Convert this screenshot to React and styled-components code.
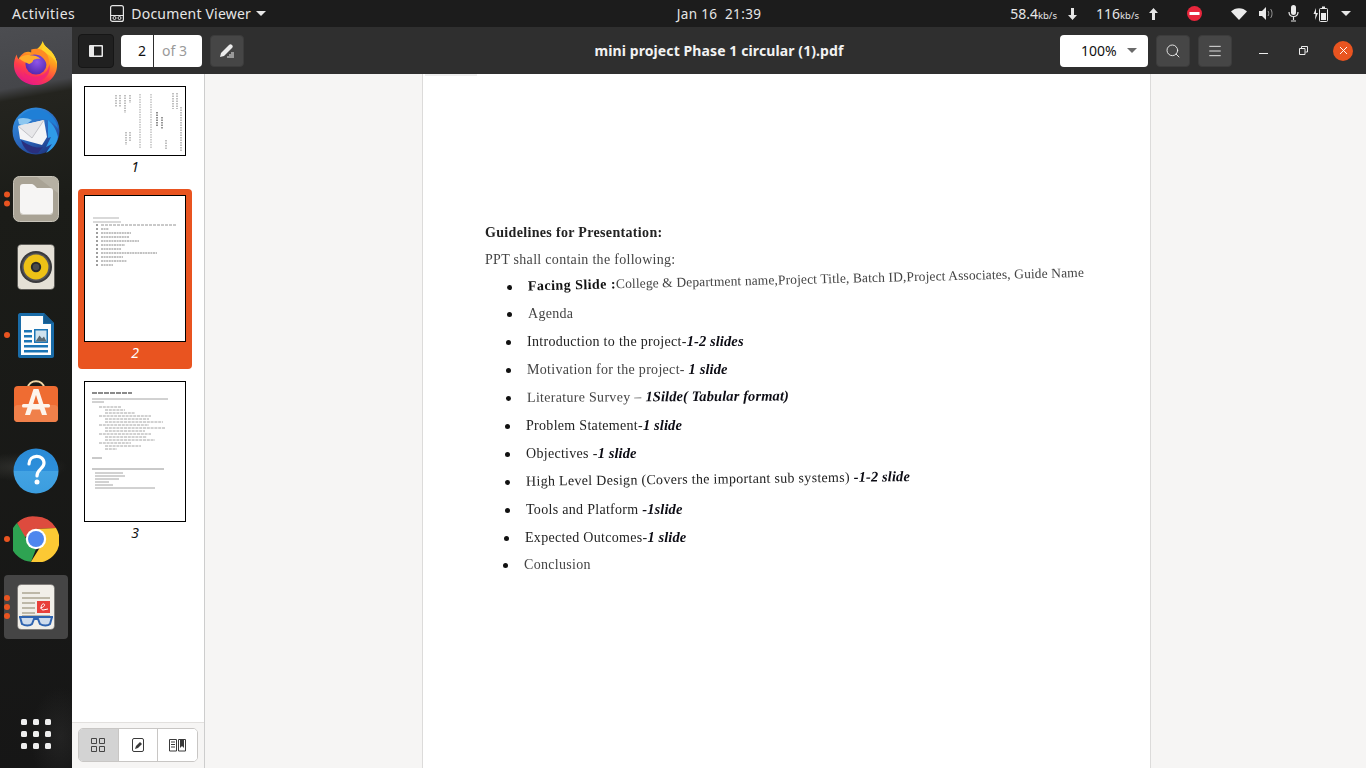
import React from "react";
import styled, { createGlobalStyle } from "styled-components";
import { Search, Menu, X } from "lucide-react";

const GlobalStyle = createGlobalStyle`
  html, body {
    margin: 0;
    padding: 0;
    height: 100%;
    overflow: hidden;
    background: #f6f5f4;
    font-family: "Noto Sans", "Open Sans", sans-serif;
  }
  * { box-sizing: border-box; }
`;

const Screen = styled.div`
  width: 1366px;
  height: 768px;
  display: flex;
  flex-direction: column;
  overflow: hidden;
`;

/* gnome top bar */
const TopBar = styled.div`
  height: 27px;
  flex: none;
  background: #1c1c1c;
  color: #e6e6e6;
  font-size: 14px;
  display: grid;
  grid-template-columns: 1fr auto 1fr;
  align-items: center;
`;

const TopLeft = styled.div`
  display: flex;
  align-items: center;
  padding-left: 12px;
`;

const Activities = styled.span`
  letter-spacing: 0.5px;
`;

const AppMenu = styled.div`
  display: flex;
  align-items: center;
  gap: 7px;
  margin-left: 35px;
  letter-spacing: 0.2px;
`;

const Caret = styled.span`
  width: 0;
  height: 0;
  border-left: ${(p) => p.$size || 5}px solid transparent;
  border-right: ${(p) => p.$size || 5}px solid transparent;
  border-top: ${(p) => p.$size || 5}px solid ${(p) => p.$color || "#e6e6e6"};
  margin-left: ${(p) => p.$gap || 0}px;
`;

const Clock = styled.div`
  font-size: 13.5px;
  letter-spacing: 0.35px;
  white-space: pre;
  margin-left: 72px;
`;

const TopRight = styled.div`
  display: flex;
  align-items: center;
  justify-content: flex-end;
  padding-right: 15px;
`;

const Speed = styled.span`
  font-size: 14px;
  margin-left: ${(p) => p.$gap}px;
  small {
    font-size: 9.5px;
  }
`;

const TrayIcon = styled.svg`
  display: block;
  flex: none;
  margin-left: ${(p) => p.$gap}px;
`;

const Body = styled.div`
  flex: 1;
  display: flex;
  min-height: 0;
`;

/* ubuntu dock */
const Dock = styled.div`
  width: 72px;
  flex: none;
  position: relative;
  display: flex;
  flex-direction: column;
  align-items: center;
  padding-top: 2px;
  background:
    radial-gradient(ellipse 50px 14px at 18px 440px, rgba(120, 120, 115, 0.22), transparent),
    radial-gradient(ellipse 30px 50px at 60px 710px, rgba(90, 90, 90, 0.18), transparent),
    linear-gradient(170deg, #4c4d51 0, #45464a 62px, #24241f 74px, #1b1c18 180px, #161616 100%);
`;

const DockSlot = styled.div`
  width: 64px;
  height: 68px;
  flex: none;
  position: relative;
  display: flex;
  align-items: center;
  justify-content: center;
  border-radius: 4px;
  ${(p) => p.$active && "height: 64px; margin-top: 2px; margin-bottom: 2px; background: #454545;"}
`;

const RunDots = styled.div`
  position: absolute;
  left: 0;
  top: 50%;
  transform: translateY(-50%);
  display: flex;
  flex-direction: column;
  gap: 3px;
  span {
    width: 6px;
    height: 6px;
    border-radius: 50%;
    background: #e95420;
  }
`;

const AppsGrid = styled.div`
  margin-top: auto;
  margin-bottom: 19px;
  display: grid;
  grid-template-columns: repeat(3, 6px);
  gap: 6px;
  span {
    width: 6px;
    height: 6px;
    border-radius: 1.5px;
    background: #eeeeee;
  }
`;

const Window = styled.div`
  flex: 1;
  display: flex;
  flex-direction: column;
  min-width: 0;
`;

const HeaderBar = styled.div`
  height: 47px;
  flex: none;
  background: #2f2f2f;
  display: flex;
  align-items: center;
  padding-left: 6px;
  position: relative;
`;

const HeadButton = styled.div`
  width: 34px;
  height: 32px;
  flex: none;
  border-radius: 4px;
  display: flex;
  align-items: center;
  justify-content: center;
  background: ${(p) => (p.$pressed ? "#202020" : "#464646")};
  border: 1px solid ${(p) => (p.$pressed ? "#161616" : "#3c3c3c")};
  margin-left: ${(p) => p.$gap || 0}px;
  ${(p) => p.$pressed && "width: 36px; height: 34px;"}
`;

const PageBox = styled.div`
  width: 81px;
  height: 32px;
  margin-left: 7px;
  flex: none;
  display: flex;
  background: #fff;
  border-radius: 4px;
  font-size: 14px;
  align-items: stretch;
`;

const PageNum = styled.div`
  width: 33px;
  padding-right: 7px;
  border-right: 1px solid #2d2d2d;
  display: flex;
  align-items: center;
  justify-content: flex-end;
  color: #111;
`;

const PageOf = styled.div`
  flex: 1;
  display: flex;
  align-items: center;
  padding-left: 8px;
  color: #9a9a9a;
`;

const Title = styled.div`
  position: absolute;
  left: 0;
  right: 0;
  top: 0;
  bottom: 1px;
  display: flex;
  align-items: center;
  justify-content: center;
  color: #f2f2f2;
  font-size: 14px;
  font-weight: 700;
  letter-spacing: 0.1px;
  pointer-events: none;
`;

const HeadEnd = styled.div`
  margin-left: auto;
  display: flex;
  align-items: center;
  padding-right: 13px;
`;

const ZoomBox = styled.div`
  width: 88px;
  height: 32px;
  background: #fff;
  border-radius: 4px;
  display: flex;
  align-items: center;
  padding-left: 21px;
  color: #111;
  font-size: 14px;
  gap: 10px;
`;

const WinCtl = styled.div`
  width: 20px;
  height: 20px;
  flex: none;
  display: flex;
  align-items: center;
  justify-content: center;
  margin-left: ${(p) => p.$gap}px;
  border-radius: 50%;
  ${(p) => p.$close && "background: #e95420;"}
`;

const Main = styled.div`
  flex: 1;
  display: flex;
  min-height: 0;
`;

const Sidebar = styled.div`
  width: 133px;
  flex: none;
  background: #fff;
  border-right: 1px solid #cdcdcd;
  display: flex;
  flex-direction: column;
`;

const ThumbList = styled.div`
  flex: 1;
  display: flex;
  flex-direction: column;
  align-items: flex-start;
  padding: 6px 0 0 6px;
`;

const ThumbItem = styled.div`
  width: 114px;
  padding: 6px 6px 0;
  margin-top: ${(p) => p.$top || 0}px;
  border-radius: 4px;
  height: ${(p) => p.$h}px;
  background: ${(p) => (p.$selected ? "#e95420" : "transparent")};
  color: ${(p) => (p.$selected ? "#fff" : "#111")};
`;

const ThumbPage = styled.svg`
  display: block;
  width: 102px;
  height: ${(p) => p.$h}px;
  background: #fff;
  border: 1px solid #000;
`;

const ThumbInk = styled.g`
  filter: blur(0.45px);
`;

const ThumbNo = styled.div`
  font-size: 14px;
  font-style: italic;
  text-align: center;
  line-height: 22px;
`;

const SideFoot = styled.div`
  height: 46px;
  flex: none;
  background: #f6f5f4;
  border-top: 1px solid #e2e0de;
  padding: 5px 6px;
`;

const ModeGroup = styled.div`
  width: 120px;
  height: 34px;
  display: flex;
  border: 1px solid #c8c6c4;
  border-radius: 5px;
  overflow: hidden;
  background: #fff;
`;

const ModeBtn = styled.div`
  flex: 1;
  display: flex;
  align-items: center;
  justify-content: center;
  background: ${(p) => (p.$on ? "#d3d3d3" : "#fff")};
  & + & {
    border-left: 1px solid #c8c6c4;
  }
`;

const Viewport = styled.div`
  flex: 1;
  min-width: 0;
  background: #f6f5f4;
  padding-left: 217px;
`;

const Sheet = styled.div`
  width: 729px;
  height: 100%;
  background: #fff;
  border-left: 1px solid #dcdbda;
  border-right: 1px solid #dcdbda;
  position: relative;
  padding-top: 145px;
`;

const Scan = styled.div`
  font-family: "Liberation Serif", "Times New Roman", serif;
  color: #1a1a1a;
  filter: blur(0.35px);
  font-size: 14px;
`;

const ScanTop = styled.div`
  position: absolute;
  left: 2px;
  top: 0;
  width: 52px;
  height: 2px;
  background: #efefef;
`;

const Heading = styled.div`
  margin-left: 62px;
  height: 27px;
  line-height: 27px;
  font-weight: 700;
  font-size: 14px;
  letter-spacing: 0.33px;
  color: #222;
`;

const Lead = styled.div`
  margin-left: 62px;
  height: 27px;
  line-height: 27px;
  font-size: 14px;
  letter-spacing: 0.3px;
  color: #444;
`;

const Points = styled.ul`
  margin: 0;
  padding: 0;
  list-style: none;
`;

const Point = styled.li`
  height: ${(p) => p.$h || 28}px;
  line-height: ${(p) => p.$h || 28}px;
  margin-left: ${(p) => p.$x}px;
  white-space: pre;
  font-size: 14px;
  letter-spacing: 0.3px;
  transform: rotate(${(p) => p.$tilt || 0}deg);
  transform-origin: left center;
  color: ${(p) => p.$ink || "#222"};
  &::before {
    content: "";
    display: inline-block;
    vertical-align: middle;
    width: 5px;
    height: 5px;
    border-radius: 50%;
    background: #111;
    margin-right: 16px;
  }
`;

const Dur = styled.b`
  font-style: italic;
  font-size: 14.5px;
  letter-spacing: 0.1px;
  color: #0c0c14;
`;

const Strong = styled.b`
  color: #111;
  letter-spacing: 0.45px;
`;

const Small = styled.span`
  font-size: 13.5px;
  letter-spacing: 0.12px;
  color: #444;
`;

/* dock icons */
const Firefox = () => (
  <svg width="46" height="46" viewBox="0 0 48 48">
    <defs>
      <linearGradient id="ffBody" x1="0.75" y1="0.05" x2="0.3" y2="1">
        <stop offset="0" stopColor="#ffe226" />
        <stop offset="0.35" stopColor="#ff9a1e" />
        <stop offset="0.68" stopColor="#ff3d4a" />
        <stop offset="1" stopColor="#e3148f" />
      </linearGradient>
      <radialGradient id="ffCore" cx="0.55" cy="0.4" r="0.7">
        <stop offset="0" stopColor="#8f55e8" />
        <stop offset="1" stopColor="#4a22a8" />
      </radialGradient>
    </defs>
    <path d="M31 1c1 5 5 7 9 11 4 5 6 10 6 14 0 12-10 21-22 21S1 38 1 26c0-4 1-8 3-11 0 2 1 4 2 5 1-3 3-5 6-7 3-1 5-1 7 0 4-2 10-5 12-12z" fill="url(#ffBody)" />
    <path d="M31 1c1 5 5 7 9 11 4 5 6 10 6 14-2-6-5-8-11-12 -2-1-4-2-6-2 2-3 3-7 2-11z" fill="#ffd32a" />
    <circle cx="24" cy="25" r="11" fill="url(#ffCore)" />
    <path d="M6 19c4-3 8-4 12-3 4 0 8 1 11 4-3-1-6 0-8 1 0 2-2 3-4 4-2-1-6-2-11-6z" fill="#ffad2b" />
    <path d="M19 10c5-2 13-1 17 6 2 4 2 9 0 13-1-6-4-11-9-13-3-1-6-1-8 0z" fill="#ff8a24" />
    <path d="M11 33c4 5 11 7 18 4 5-2 8-6 9-12 2 10-5 18-14 18-6 0-11-4-13-10z" fill="#f0207e" opacity="0.75" />
  </svg>
);

const Thunderbird = () => (
  <svg width="50" height="50" viewBox="0 0 50 50">
    <defs>
      <linearGradient id="tbBody" x1="0.2" y1="0" x2="0.8" y2="1">
        <stop offset="0" stopColor="#2f8fe0" />
        <stop offset="0.6" stopColor="#2a62b8" />
        <stop offset="1" stopColor="#1c2f78" />
      </linearGradient>
    </defs>
    <circle cx="25" cy="25" r="23.5" fill="url(#tbBody)" />
    <path d="M9 12c5-8 16-11 26-6 6 3 11 9 12 17-4-6-10-10-18-10-7 0-14 2-20-1z" fill="#1f7fd6" />
    <path d="M37 14c5 4 9 11 10 17-1 7-6 13-12 16l6-9-6 3 5-10-3 1z" fill="#2f9be8" />
    <path d="M7 13c4-2 10-1 14 1l-8 6-5-2z" fill="#8dc7f0" />
    <path d="M7 20l26-6 3 17-5 8L9 33z" fill="#f4f4f6" />
    <path d="M7 20l14 12 12-18" fill="#e7e7ea" stroke="#b7b7bd" strokeWidth="0.8" />
    <path d="M10 34c8 6 16 9 22 7l-5 6C18 49 12 42 10 34z" fill="#2a2f7e" />
  </svg>
);

const Files = () => (
  <svg width="46" height="46" viewBox="0 0 46 46">
    <rect x="0.5" y="0.5" width="45" height="45" rx="6" fill="#a9a395" stroke="#c9c5ba" />
    <path d="M24 1h15c4 0 6 2 6 6v10z" fill="#b6b1a4" />
    <path d="M7 11c0-2 1-3 3-3h9c1 0 2 1 3 2l2 2h13c2 0 3 1 3 3v20c0 2-1 3-3 3H10c-2 0-3-1-3-3z" fill="#f6f5f4" />
    <path d="M7 36v-1c0 2 1 3 3 3h27c2 0 3-1 3-3v1c0 2-1 3-3 3H10c-2 0-3-1-3-3z" fill="#d2cfc8" />
  </svg>
);

const Rhythmbox = () => (
  <svg width="38" height="46" viewBox="0 0 38 46">
    <rect x="0.5" y="0.5" width="37" height="45" rx="4" fill="#e4e0d6" stroke="#3a3a38" strokeOpacity="0.5" />
    <circle cx="19" cy="23" r="16" fill="#3a3a3c" />
    <circle cx="19" cy="23" r="14" fill="#55555a" />
    <circle cx="19" cy="23" r="12.4" fill="#eec216" />
    <circle cx="19" cy="23" r="5.2" fill="#2a2a2c" />
    <circle cx="19" cy="23" r="3.2" fill="#4a4a4c" />
  </svg>
);

const Writer = () => (
  <svg width="38" height="46" viewBox="0 0 38 46">
    <path d="M1 3c0-1 1-2 2-2h24l10 10v33c0 1-1 2-2 2H3c-1 0-2-1-2-2z" fill="#1a6ca8" />
    <path d="M4 4h22v8h8v31H4z" fill="#fdfdfd" />
    <path d="M27 1l10 10H27z" fill="#155a8e" />
    <path d="M7 18h8v2.4H7zM7 23h8v2.4H7zM7 28h8v2.4H7zM7 33h24v2.4H7zM7 38h24v2.4H7z" fill="#1b75b5" />
    <rect x="17" y="17" width="14" height="14" fill="#1b75b5" />
    <rect x="18.5" y="18.5" width="11" height="11" fill="#cfe2ee" />
    <path d="M18.5 29.5l4-6 2.5 3 2-2 2.5 5z" fill="#5b6a72" />
  </svg>
);

const SoftwareStore = () => (
  <svg width="46" height="46" viewBox="0 0 46 46">
    <path d="M15 8c0-9 16-9 16 0" fill="none" stroke="#f1d6a6" strokeWidth="2" />
    <rect x="1" y="6" width="44" height="36" rx="4" fill="#ef6c32" />
    <rect x="1" y="25" width="44" height="17" rx="4" fill="#f0804a" />
    <path d="M20.5 9h5L34 35h-5l-2-5.500H19L17 35h-5zM23 15l-3 9.500h6z" fill="#fdf4ec" />
    <rect x="9" y="24" width="28" height="3.4" rx="1.5" fill="#fdf4ec" />
  </svg>
);

const Help = () => (
  <svg width="46" height="46" viewBox="0 0 46 46">
    <defs>
      <linearGradient id="helpBg" x1="0" y1="0" x2="0" y2="1">
        <stop offset="0" stopColor="#2a8ad6" />
        <stop offset="0.5" stopColor="#2d8fdb" />
        <stop offset="0.5" stopColor="#43a3e3" />
        <stop offset="1" stopColor="#3b9ddf" />
      </linearGradient>
    </defs>
    <circle cx="23" cy="23" r="22.5" fill="url(#helpBg)" />
    <path d="M16 16c0-10 15-10 15-1 0 6-7 6-7 13" fill="none" stroke="#fff" strokeWidth="3.2" strokeLinecap="round" />
    <circle cx="24" cy="34" r="2.5" fill="#fff" />
  </svg>
);

const Chrome = () => (
  <svg width="46" height="46" viewBox="0 0 46 46">
    <path d="M23 .5A22.5 22.5 0 0 1 43 12L23 13 10.800 22 4 7A22.500 22.500 0 0 1 23 .5z" fill="#dd4b3e" />
    <path d="M4 7l10 17 9 9-5 12.800A22.500 22.500 0 0 1 4 7z" fill="#2ea352" />
    <path d="M43 12a22.500 22.500 0 0 1-25 33.800L29 28l3-8-9-7z" fill="#fcc934" />
    <circle cx="23" cy="23" r="10.200" fill="#fff" />
    <circle cx="23" cy="23" r="8" fill="#4e86ee" />
  </svg>
);

const Reader = () => (
  <svg width="38" height="46" viewBox="0 0 38 46">
    <rect x="0.5" y="0.5" width="37" height="45" rx="4" fill="#f1efe9" stroke="#55534f" strokeOpacity="0.4" />
    <path d="M5 8h18v2H5zM5 13h28v2H5zM5 18h13v2H5zM5 23h13v2H5zM5 28h13v2H5zM5 31h28v2H5z" fill="#bdb8a8" />
    <rect x="20" y="17" width="13" height="12" fill="#e8403a" />
    <path d="M23 24c3 0 6-3 4-4-3-1-4 6-1 6l5-1" fill="none" stroke="#fff" strokeWidth="1" />
    <path d="M2 33h34M3 33l2 7c3 2 8 2 10 0l2-5h4l2 5c3 2 8 2 10 0l2-7" fill="#cfdcec" stroke="#2f64b0" strokeWidth="2" />
  </svg>
);

const SideToggleIcon = () => (
  <svg width="14" height="12" viewBox="0 0 14 12">
    <path d="M0 1a1 1 0 0 1 1-1h12a1 1 0 0 1 1 1v10a1 1 0 0 1-1 1H1a1 1 0 0 1-1-1zM5 1.500v9h7.500v-9z" fill="#eaeaea" fillRule="evenodd" />
  </svg>
);

const AnnotateIcon = () => (
  <svg width="16" height="16" viewBox="0 0 16 16">
    <path d="M1 14l1-4 8-8c1-1 2-1 3 0s1 2 0 3l-8 8z" fill="#ececec" />
    <path d="M8 14h7M10 12h5M12 10h3" stroke="#ececec" strokeWidth="1" />
  </svg>
);

const BookIcon = () => (
  <svg width="14" height="16" viewBox="0 0 14 16" style={{ display: "block" }}>
    <path d="M3 1.500h8a1.500 1.500 0 0 1 1.500 1.500v10a1.500 1.500 0 0 1-1.500 1.500H3A1.500 1.500 0 0 1 1.500 13V3A1.500 1.500 0 0 1 3 1.500z" fill="none" stroke="#3a3a3a" />
    <path d="M4 12l1-3 4-4 2 2-4 4z" fill="#3a3a3a" />
  </svg>
);

const TocIcon = () => (
  <svg width="17" height="15" viewBox="0 0 17 15">
    <path d="M.5 1.500h7v11.500h-7zM9.500 1.500h7V13h-7z" fill="none" stroke="#3a3a3a" />
    <path d="M2 4h4M2 6.500h4M2 9h4" stroke="#3a3a3a" />
    <path d="M11 1h4v9l-2-2-2 2z" fill="#3a3a3a" />
  </svg>
);

const GridIcon = () => (
  <svg width="14" height="14" viewBox="0 0 14 14">
    <path d="M.5.500h5v5h-5zM8.500.500h5v5h-5zM.5 8.500h5v5h-5zM8.500 8.500h5v5h-5z" fill="none" stroke="#444" />
  </svg>
);

const dockApps = [
  { icon: <Firefox /> },
  { icon: <Thunderbird /> },
  { icon: <Files />, dots: 2 },
  { icon: <Rhythmbox /> },
  { icon: <Writer />, dots: 1 },
  { icon: <SoftwareStore /> },
  { icon: <Help /> },
  { icon: <Chrome />, dots: 1 },
  { icon: <Reader />, dots: 3, active: true },
];

// rough grey bars standing in for the tiny rendered page previews
const PageOneLines = () => (
  <ThumbInk stroke="#8d8d8d" strokeWidth="1.1" strokeDasharray="1.500 1">
    <path d="M31 8v12M35 8v12M40 8v18M45 8v8" />
    <path d="M55 7v54M66 7v54" stroke="#aaa" />
    <path d="M72 25v14" stroke="#333" />
    <path d="M77 30v12" stroke="#444" />
    <path d="M88 6v16M92 6v16M96 20v44M81 53v9" />
    <path d="M41 45v13M45 45v10" />
  </ThumbInk>
);

const PageTwoLines = () => (
  <ThumbInk strokeWidth="0.9" stroke="#777">
    <path d="M8 22h26M8 26h28" stroke="#aaa" />
    <path d="M16 29h76" stroke="#888" strokeDasharray="3 1" />
    {[33, 37, 41, 45, 49, 53, 57, 61, 65, 69].map((y, i) => (
      <path key={y} d={`M16 ${y}h${[8, 30, 28, 38, 24, 20, 56, 22, 26, 12][i]}`} strokeDasharray="2 0.6" />
    ))}
    {[29, 33, 37, 41, 45, 49, 53, 57, 61, 65, 69].map((y) => (
      <circle key={y} cx="12" cy={y} r="0.8" fill="#222" stroke="none" />
    ))}
  </ThumbInk>
);

const PageThreeLines = () => (
  <ThumbInk strokeWidth="0.9" stroke="#9a9a9a">
    <path d="M7 11h40" stroke="#666" strokeWidth="1.300" strokeDasharray="5 1" />
    <path d="M7 17h76M7 20h12" />
    {[25, 28, 31, 34, 37, 40, 43, 46, 49, 52, 55, 58, 61, 64, 67].map((y, i) => (
      <path key={y} d={`M${i % 3 === 0 ? 14 : 20} ${y}h${[22, 20, 30, 52, 44, 58, 50, 60, 40, 52, 42, 50, 32, 36, 12][i]}`} strokeDasharray="3 0.8" />
    ))}
    <path d="M7 76h10M7 87h72" stroke="#888" />
    <path d="M10 91h28M10 94h30M10 97h24M10 100h14M10 103h18M10 106h60" />
  </ThumbInk>
);

export default function App() {
  return (
    <Screen>
      <GlobalStyle />
      <TopBar>
        <TopLeft>
          <Activities>Activities</Activities>
          <AppMenu>
            <svg width="14" height="17" viewBox="0 0 14 17">
              <rect x="0.6" y="0.6" width="12.800" height="15.800" rx="2" fill="none" stroke="#e6e6e6" strokeWidth="1.200" />
              <path d="M1 10.500h12" stroke="#e6e6e6" />
              <circle cx="4.500" cy="13" r="1.500" fill="none" stroke="#e6e6e6" />
              <circle cx="9.500" cy="13" r="1.500" fill="none" stroke="#e6e6e6" />
            </svg>
            Document Viewer
            <Caret $gap={-2} />
          </AppMenu>
        </TopLeft>
        <Clock>{"Jan 16  21:39"}</Clock>
        <TopRight>
          <Speed $gap={0}>58.4<small>kb/s</small></Speed>
          <TrayIcon $gap={11} width="9" height="12" viewBox="0 0 9 12">
            <path d="M3 0h3v7h3l-4.500 5L0 7h3z" fill="#e6e6e6" />
          </TrayIcon>
          <Speed $gap={19}>116<small>kb/s</small></Speed>
          <TrayIcon $gap={10} width="9" height="12" viewBox="0 0 9 12">
            <path d="M3 12h3V5h3L4.500 0 0 5h3z" fill="#e6e6e6" />
          </TrayIcon>
          <TrayIcon $gap={29} width="15" height="15" viewBox="0 0 15 15">
            <circle cx="7.500" cy="7.500" r="7.500" fill="#e8263c" />
            <rect x="2.500" y="6" width="10" height="3" fill="#fff" />
          </TrayIcon>
          <TrayIcon $gap={29} width="16" height="12" viewBox="0 0 16 12">
            <path d="M0 3.500C4-1 12-1 16 3.500L8 12z" fill="#eaeaea" />
          </TrayIcon>
          <TrayIcon $gap={12} width="15" height="13" viewBox="0 0 15 13">
            <path d="M0 4h3l4-4v13L3 9H0z" fill="#eaeaea" />
            <path d="M9 4c1 1 1 4 0 5M11.500 2c2 2 2 7 0 9" fill="none" stroke="#9a9a9a" />
          </TrayIcon>
          <TrayIcon $gap={14} width="11" height="17" viewBox="0 0 11 17">
            <rect x="3" y="0" width="5" height="10" rx="2.500" fill="#eaeaea" />
            <path d="M1 7c0 6 9 6 9 0M5.500 11v4M3 16h5" fill="none" stroke="#eaeaea" strokeWidth="1.200" />
          </TrayIcon>
          <TrayIcon $gap={14} width="15" height="16" viewBox="0 0 15 16">
            <path d="M3 2l-2.500 6h2L2 14l3-7H3z" fill="#eaeaea" />
            <rect x="6.500" y="2.500" width="8" height="13" rx="1" fill="none" stroke="#eaeaea" />
            <rect x="9" y="0.500" width="3" height="2" fill="#eaeaea" />
            <rect x="8" y="7" width="5" height="7" fill="#eaeaea" />
          </TrayIcon>
          <Caret $gap={13} />
        </TopRight>
      </TopBar>
      <Body>
        <Dock>
          {dockApps.map((app, i) => (
            <DockSlot key={i} $active={app.active}>
              {app.dots && (
                <RunDots>
                  {Array.from({ length: app.dots }).map((_, d) => (
                    <span key={d} />
                  ))}
                </RunDots>
              )}
              {app.icon}
            </DockSlot>
          ))}
          <AppsGrid>
            {Array.from({ length: 9 }).map((_, i) => (
              <span key={i} />
            ))}
          </AppsGrid>
        </Dock>
        <Window>
          <HeaderBar>
            <HeadButton $pressed>
              <SideToggleIcon />
            </HeadButton>
            <PageBox>
              <PageNum>2</PageNum>
              <PageOf>of 3</PageOf>
            </PageBox>
            <HeadButton $gap={8}>
              <AnnotateIcon />
            </HeadButton>
            <Title>mini project Phase 1 circular (1).pdf</Title>
            <HeadEnd>
              <ZoomBox>
                100%
                <Caret $color="#6a6a6a" />
              </ZoomBox>
              <HeadButton $gap={8}>
                <Search size={16} color="#ececec" strokeWidth={1.4} />
              </HeadButton>
              <HeadButton $gap={8}>
                <Menu size={16} color="#ececec" strokeWidth={1.4} />
              </HeadButton>
              <WinCtl $gap={21}>
                <svg width="9" height="9" viewBox="0 0 9 9">
                  <path d="M0 7.500h9" stroke="#ececec" />
                </svg>
              </WinCtl>
              <WinCtl $gap={20}>
                <svg width="9" height="9" viewBox="0 0 9 9">
                  <path d="M.5 2.500h5.500v6H.5zM2.500 2V.5h6v5.500H6.500" fill="none" stroke="#ececec" />
                </svg>
              </WinCtl>
              <WinCtl $gap={20} $close>
                <X size={13} color="#fff" strokeWidth={1.8} />
              </WinCtl>
            </HeadEnd>
          </HeaderBar>
          <Main>
            <Sidebar>
              <ThumbList>
                <ThumbItem $h={109}>
                  <ThumbPage $h={70} viewBox="0 0 100 68"><PageOneLines /></ThumbPage>
                  <ThumbNo>1</ThumbNo>
                </ThumbItem>
                <ThumbItem $selected $h={180}>
                  <ThumbPage $h={147} viewBox="0 0 100 145"><PageTwoLines /></ThumbPage>
                  <ThumbNo>2</ThumbNo>
                </ThumbItem>
                <ThumbItem $top={6} $h={170}>
                  <ThumbPage $h={141} viewBox="0 0 100 139"><PageThreeLines /></ThumbPage>
                  <ThumbNo>3</ThumbNo>
                </ThumbItem>
              </ThumbList>
              <SideFoot>
                <ModeGroup>
                  <ModeBtn $on><GridIcon /></ModeBtn>
                  <ModeBtn><BookIcon /></ModeBtn>
                  <ModeBtn><TocIcon /></ModeBtn>
                </ModeGroup>
              </SideFoot>
            </Sidebar>
            <Viewport>
              <Sheet>
                <ScanTop />
                <Scan>
                  <Heading>Guidelines for Presentation:</Heading>
                  <Lead>PPT shall contain the following:</Lead>
                  <Points>
                    <Point $x={84} $tilt={-1.4} $h={27}>
                      <Strong>Facing Slide :</Strong>
                      <Small>College &amp; Department name,Project Title, Batch ID,Project Associates, Guide Name</Small>
                    </Point>
                    <Point $x={84} $ink="#444" $h={27}>Agenda</Point>
                    <Point $x={83}>Introduction to the project-<Dur>1-2 slides</Dur></Point>
                    <Point $x={83} $ink="#444">Motivation for the project- <Dur>1 slide</Dur></Point>
                    <Point $x={83} $tilt={-0.3} $ink="#444">Literature Survey – <Dur>1Silde( Tabular format)</Dur></Point>
                    <Point $x={82}>Problem Statement-<Dur>1 slide</Dur></Point>
                    <Point $x={82}>Objectives -<Dur>1 slide</Dur></Point>
                    <Point $x={82} $tilt={-0.7}>High Level Design (Covers the important sub systems) <Dur>-1-2 slide</Dur></Point>
                    <Point $x={82}>Tools and Platform <Dur>-1slide</Dur></Point>
                    <Point $x={81}>Expected Outcomes-<Dur>1 slide</Dur></Point>
                    <Point $x={80} $ink="#444">Conclusion</Point>
                  </Points>
                </Scan>
              </Sheet>
            </Viewport>
          </Main>
        </Window>
      </Body>
    </Screen>
  );
}
